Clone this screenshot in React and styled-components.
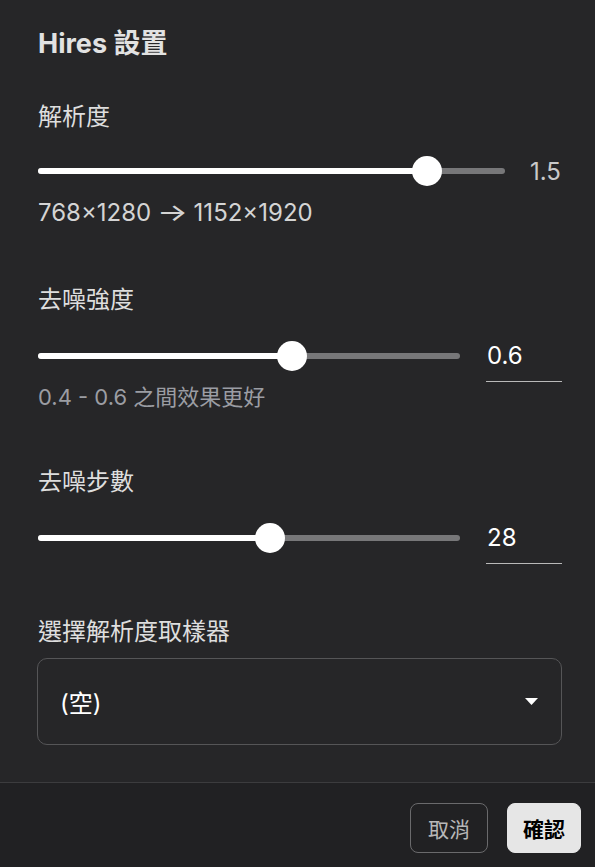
import React, { useState } from 'react';
import styled, { createGlobalStyle } from 'styled-components';

const GlobalStyle = createGlobalStyle`
  html, body {
    margin: 0;
    padding: 0;
    background: #262628;
  }
  * {
    box-sizing: border-box;
  }
`;

const Panel = styled.div`
  width: 595px;
  min-height: 867px;
  display: flex;
  flex-direction: column;
  background: #262628;
  font-family: Inter, "Noto Sans CJK TC", sans-serif;
  color: #e0e0e0;
`;

const Body = styled.div`
  flex: 1;
  padding: 28px 33px 37px 37px;
`;

const Title = styled.h2`
  margin: 0 0 0 1px;
  font-size: 27px;
  line-height: 32px;
  font-weight: 700;
  color: #e2e2e2;
`;

const Section = styled.div`
  margin-top: ${(p) => p.$gap}px;
`;

const Label = styled.div`
  margin-left: 1px;
  font-size: 24px;
  line-height: 32px;
  color: #dedede;
`;

const SliderRow = styled.div`
  margin-top: ${(p) => p.$top}px;
  height: 52px;
  display: flex;
  align-items: center;
  gap: 25px;
`;

const Track = styled.div`
  position: relative;
  flex: 1;
  height: 6px;
  margin-left: 1px;
  border-radius: 3px;
  background: #777779;
`;

const Fill = styled.div`
  height: 100%;
  border-radius: 3px;
  background: #ffffff;
`;

const Thumb = styled.div`
  position: absolute;
  top: 50%;
  width: 30px;
  height: 30px;
  border-radius: 50%;
  background: #ffffff;
  transform: translate(-50%, -50%);
`;

const ValueText = styled.div`
  width: 32px;
  font-size: 24px;
  color: #c9c9c9;
`;

const NumberInput = styled.input`
  width: 76px;
  height: 52px;
  margin-left: 1px;
  padding: 0 1px;
  border: none;
  border-bottom: 1px solid #b9b9b9;
  background: transparent;
  color: #ffffff;
  font-family: Inter, "Noto Sans CJK TC", sans-serif;
  font-size: 24px;
  outline: none;
`;

const Hint = styled.div`
  margin-left: 1px;
  font-size: ${(p) => (p.$muted ? 22 : 24)}px;
  line-height: ${(p) => (p.$muted ? 30 : 32)}px;
  color: ${(p) => (p.$muted ? '#9b9da3' : '#d4d4d4')};
`;

const Arrow = styled.span`
  display: inline-block;
  transform: scaleX(1.35);
  margin: 0 3px;
`;

const Select = styled.div`
  margin-top: 10px;
  height: 87px;
  display: flex;
  align-items: center;
  justify-content: space-between;
  padding: 0 23px 0 22px;
  border: 1px solid #555557;
  border-radius: 10px;
  font-size: 24px;
  color: #ffffff;
`;

const Footer = styled.div`
  display: flex;
  justify-content: flex-end;
  gap: 19px;
  padding: 20px 14px 14px;
  border-top: 1px solid #3c3c3e;
  background: #212123;
`;

const Button = styled.button`
  height: 50px;
  padding: 0 ${(p) => (p.$primary ? 15 : 17)}px;
  border-radius: 8px;
  border: 1px solid ${(p) => (p.$primary ? '#e6e6e6' : '#6a6a6c')};
  background: ${(p) => (p.$primary ? '#e6e6e6' : 'transparent')};
  color: ${(p) => (p.$primary ? '#000000' : '#b8b8b8')};
  font-family: Inter, "Noto Sans CJK TC", sans-serif;
  font-size: 21px;
  font-weight: ${(p) => (p.$primary ? 700 : 400)};
  cursor: pointer;
`;

function Slider({ pct }) {
  return (
    <Track>
      <Fill style={{ width: `${pct}%` }} />
      <Thumb style={{ left: `${pct}%` }} />
    </Track>
  );
}

export default function App() {
  const [strength, setStrength] = useState('0.6');
  const [steps, setSteps] = useState('28');

  return (
    <Panel>
      <GlobalStyle />
      <Body>
        <Title>Hires 設置</Title>

        <Section $gap={41}>
          <Label>解析度</Label>
          <SliderRow $top={12}>
            <Slider pct={83.3} />
            <ValueText>1.5</ValueText>
          </SliderRow>
          <Hint>768×1280 <Arrow>→</Arrow> 1152×1920</Hint>
        </Section>

        <Section $gap={55}>
          <Label>去噪強度</Label>
          <SliderRow $top={14}>
            <Slider pct={60.2} />
            <NumberInput value={strength} onChange={(e) => setStrength(e.target.value)} />
          </SliderRow>
          <Hint $muted>0.4 - 0.6 之間效果更好</Hint>
        </Section>

        <Section $gap={54}>
          <Label>去噪步數</Label>
          <SliderRow $top={14}>
            <Slider pct={55} />
            <NumberInput value={steps} onChange={(e) => setSteps(e.target.value)} />
          </SliderRow>
        </Section>

        <Section $gap={52}>
          <Label>選擇解析度取樣器</Label>
          <Select>
            <span>(空)</span>
            <svg width="13" height="7" viewBox="0 0 13 7">
              <path d="M0 0 L13 0 L6.5 7 Z" fill="#ffffff" />
            </svg>
          </Select>
        </Section>
      </Body>
      <Footer>
        <Button>取消</Button>
        <Button $primary>確認</Button>
      </Footer>
    </Panel>
  );
}
